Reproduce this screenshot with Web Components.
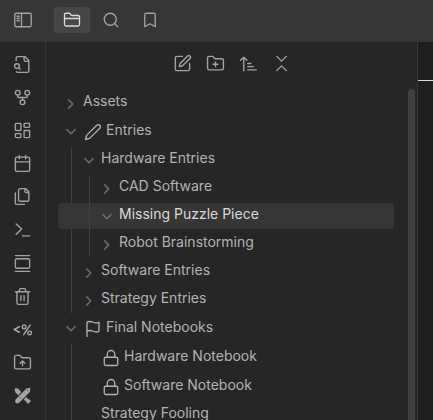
<!DOCTYPE html>
<html lang="en">
<head>
<meta charset="utf-8">
<title>Vault</title>
<style>
  html, body { height: 100%; margin: 0; }
  body {
    background: #262626;
    color: #b3b3b3;
    font: 14px/20px Inter, "Liberation Sans", sans-serif;
    overflow: hidden;
  }
</style>
</head>
<body>
<vault-window></vault-window>
<script>
const ICONS = {
  sidebar: '<rect x="1" y="3" width="22" height="18" rx="2"/><path d="M10 3v18M4 7h3M4 10h3M4 13h3"/>',
  folder: '<path d="M20 20a2 2 0 0 0 2-2V8a2 2 0 0 0-2-2h-7.9a2 2 0 0 1-1.69-.9L9.6 3.9A2 2 0 0 0 7.93 3H4a2 2 0 0 0-2 2v13a2 2 0 0 0 2 2ZM2 10h20"/>',
  search: '<circle cx="11" cy="11" r="8"/><path d="m21 21-4.3-4.3"/>',
  bookmark: '<path d="m19 21-7-4-7 4V5a2 2 0 0 1 2-2h10a2 2 0 0 1 2 2z"/>',
  fileSearch: '<path d="M14 2v4a2 2 0 0 0 2 2h4M4.27 21a2 2 0 0 0 1.73 1H18a2 2 0 0 0 2-2V7l-5-5H6a2 2 0 0 0-2 2v3M9 18l-1.5-1.5"/><circle cx="5" cy="14" r="3"/>',
  fork: '<circle cx="12" cy="18" r="3"/><circle cx="6" cy="6" r="3"/><circle cx="18" cy="6" r="3"/><path d="M18 9v2c0 .6-.4 1-1 1H7c-.6 0-1-.4-1-1V9M12 12v3"/>',
  dashboard: '<rect x="3" y="3" width="7" height="9" rx="1"/><rect x="14" y="3" width="7" height="5" rx="1"/><rect x="14" y="12" width="7" height="9" rx="1"/><rect x="3" y="16" width="7" height="5" rx="1"/>',
  calendar: '<rect x="3" y="4" width="18" height="18" rx="2"/><path d="M16 2v4M8 2v4M3 10h18"/>',
  files: '<path d="M20 7h-3a2 2 0 0 1-2-2V2M9 18a2 2 0 0 1-2-2V4a2 2 0 0 1 2-2h7l4 4v10a2 2 0 0 1-2 2ZM3 7.6v12.8A1.6 1.6 0 0 0 4.6 22h9.8"/>',
  terminal: '<path d="m4 18 7-6.5L4 5M12 20h9"/>',
  gallery: '<path d="M3 2h18M3 22h18"/><rect x="3" y="6" width="18" height="12" rx="2"/>',
  trash: '<path d="M3 6h18M19 6v14c0 1-1 2-2 2H7c-1 0-2-1-2-2V6M8 6V4c0-1 1-2 2-2h4c1 0 2 1 2 2v2M10 11v6M14 11v6"/>',
  template: '<path stroke-width="2" d="M8 8.5 1.5 12 8 15.5M21.5 6.5l-8 12"/><circle cx="14" cy="8.7" r="2.3"/><circle cx="21" cy="16.3" r="2.3"/>',
  folderUp: '<path d="M20 20a2 2 0 0 0 2-2V8a2 2 0 0 0-2-2h-7.9a2 2 0 0 1-1.69-.9L9.6 3.9A2 2 0 0 0 7.93 3H4a2 2 0 0 0-2 2v13a2 2 0 0 0 2 2ZM12 10v6M9 13l3-3 3 3"/>',
  draw: '<g fill="currentColor" stroke="none"><path d="M22 2.2l-.5 5L8.5 20.5c-1.5 1.5-3.7 2-5.2.8-1.2-1.5-.7-3.7.8-5.2L17 3.2z"/><path d="M2.2 3.2c2-.8 4.5.1 6 2l2.3 2.8-3.8 3.8-2.6-2.5C2.5 8 1.9 5.5 2.2 3.2z"/><path d="M16.4 13.8l3 3c1.8 0 2.9 1.2 2.9 2.6l-2.7 2.8c-1.5 0-2.7-.9-2.7-2.7l-3.4-2.2z"/></g><path stroke="#262626" stroke-width="1" d="M18 5.5l.6.6M9 14.5l.8.8"/>',
  edit: '<path d="M12 3H5a2 2 0 0 0-2 2v14a2 2 0 0 0 2 2h14a2 2 0 0 0 2-2v-7M18.38 2.62a1 1 0 0 1 3 3l-9.02 9.02a2 2 0 0 1-.85.5l-2.87.84a.5.5 0 0 1-.62-.62l.84-2.87a2 2 0 0 1 .5-.85z"/>',
  folderPlus: '<path d="M20 20a2 2 0 0 0 2-2V8a2 2 0 0 0-2-2h-7.9a2 2 0 0 1-1.69-.9L9.6 3.9A2 2 0 0 0 7.93 3H4a2 2 0 0 0-2 2v13a2 2 0 0 0 2 2ZM12 10v6M9 13h6"/>',
  sort: '<path d="m2 8 4-4 4 4M6 4v17M11 12h4M11 16h7M11 20h11"/>',
  collapse: '<path d="m6 21 6-6 6 6M6 3l6 6 6-6"/>',
  pencil: '<path d="M17 3a2.83 2.83 0 1 1 4 4L7.5 20.5 2 22l1.5-5.5Z"/>',
  flag: '<path d="M4 15s1-1 4-1 5 2 8 2 4-1 4-1V3s-1 1-4 1-5-2-8-2-4 1-4 1zM4 22V3"/>',
  lock: '<rect x="3" y="11" width="18" height="11" rx="2"/><path d="M7 11V7a5 5 0 0 1 10 0v4"/>',
  chevron: '<path stroke-width="3" d="m8 5 7 7-7 7"/>'
};

const define = (tag, html, setup) => customElements.define(tag, class extends HTMLElement {
  connectedCallback() {
    if (this.shadowRoot) return;
    const template = document.createElement('template');
    template.innerHTML = html;
    this.attachShadow({ mode: 'open' }).append(template.content.cloneNode(true));
    if (setup) setup(this, this.shadowRoot);
  }
});

define('ui-icon', `
  <style>
    :host { display: block; flex: none; width: var(--icon-size, 19px); height: var(--icon-size, 19px); }
    svg { display: block; width: 100%; height: 100%; fill: none; stroke: currentColor;
          stroke-width: 1.75; stroke-linecap: round; stroke-linejoin: round; }
  </style>
  <svg viewBox="0 0 24 24" aria-hidden="true"></svg>`,
  (host, root) => { root.querySelector('svg').innerHTML = ICONS[host.getAttribute('name')]; });

define('icon-button', `
  <style>
    :host { display: block; flex: none; color: #a3a3a3; }
    button { display: grid; place-items: center; width: var(--button-width, 30px); height: var(--button-height, 30px);
             padding: 0; border: 0; border-radius: 4px; background: none; color: inherit; }
    :host([active]) { color: #dadada; }
    :host([active]) button { background: #464646; }
  </style>
  <button type="button"></button>`,
  (host, root) => {
    const button = root.querySelector('button');
    button.innerHTML = `<ui-icon name="${host.getAttribute('icon')}"></ui-icon>`;
    button.setAttribute('aria-label', host.getAttribute('label'));
  });

define('tab-header', `
  <style>
    :host { display: flex; align-items: center; height: 42px; box-sizing: border-box; padding: 0 5px 2px;
            gap: 3px; background: #363636; --button-width: 36px; --button-height: 26px; --icon-size: 18px; }
    ::slotted(:first-child) { margin-right: 10px; }
  </style>
  <slot></slot>`);

define('side-ribbon', `
  <style>
    :host { display: flex; flex-direction: column; justify-content: space-between; align-items: center;
            box-sizing: border-box; width: 46px; flex: none; padding: 7px 0 9px; border-right: 1px solid #363636; }
  </style>
  <slot></slot>`);

define('file-panel', `
  <style>
    :host { display: flex; flex-direction: column; flex: 1; min-width: 0; border-right: 1px solid #363636; }
    nav { display: flex; justify-content: center; gap: 3px; padding: 6px 0 11px; }
    .scroller { flex: 1; min-height: 0; display: flex; }
    .list { flex: 1; min-width: 0; overflow: hidden; padding: 1px 14px 0 12px; }
    .bar { width: 7px; margin-right: 2px; border-radius: 4px 4px 0 0; background: #3f3f3f; }
  </style>
  <nav aria-label="File actions"><slot name="actions"></slot></nav>
  <div class="scroller"><div class="list"><slot></slot></div><div class="bar"></div></div>`);

define('tree-item', `
  <style>
    :host { display: block; margin-bottom: 2px; --icon-size: 18px; }
    button { display: flex; align-items: center; width: 100%; height: 26px; padding: 0 0 4px;
             padding-left: calc(25px + var(--level, 0) * 18px);
             border: 0; border-radius: 4px; background: none; color: inherit; font: inherit; text-align: left; }
    :host([icon]) button { height: 27px; }
    :host([active]) button { background: #363636; color: #dadada; }
    .fold { --icon-size: 14px; margin: 5px 5px 0 -19px; color: #6a6a6a; }
    .open { transform: rotate(90deg); }
    .mark { margin: 5px 4px 0 1px; }
    .label { white-space: nowrap; }
    .children { position: relative; margin-top: 2px; }
    .children::before { content: ""; position: absolute; top: 0; bottom: 0; width: 1px;
                        left: calc(13px + var(--level, 0) * 18px); background: #414141; }
    .children:not(.shown) { display: none; }
    ::slotted(tree-item:last-child) { margin-bottom: 0; }
  </style>
  <button type="button"><span class="label"></span></button>
  <div class="children"><slot></slot></div>`,
  (host, root) => {
    const parent = host.parentElement && host.parentElement.closest('tree-item');
    const level = parent ? Number(parent.dataset.level) + 1 : 0;
    host.dataset.level = level;
    const button = root.querySelector('button');
    button.style.setProperty('--level', level);
    root.querySelector('.children').style.setProperty('--level', level);
    root.querySelector('.label').textContent = host.getAttribute('label');
    const icon = host.getAttribute('icon');
    if (icon) button.insertAdjacentHTML('afterbegin', `<ui-icon class="mark" name="${icon}"></ui-icon>`);
    const fold = host.getAttribute('fold');
    if (fold) {
      button.insertAdjacentHTML('afterbegin', `<ui-icon class="fold ${fold}" name="chevron"></ui-icon>`);
      button.setAttribute('aria-expanded', String(fold === 'open'));
    }
    root.querySelector('.children').classList.toggle('shown', host.childElementCount > 0);
  });

define('note-pane', `
  <style>
    :host { display: block; flex: none; width: 15px; padding-top: 38px; background: #1e1e1e; }
    hr { margin: 0; border: 0; border-top: 1px solid #dadada; }
  </style>
  <hr>`);

define('vault-window', `
  <style>
    :host { display: flex; flex-direction: column; height: 100vh; }
    main { display: flex; flex: 1; min-height: 0; }
  </style>
  <tab-header>
    <icon-button icon="sidebar" label="Toggle sidebar"></icon-button>
    <icon-button icon="folder" label="Files" active></icon-button>
    <icon-button icon="search" label="Search"></icon-button>
    <icon-button icon="bookmark" label="Bookmarks"></icon-button>
  </tab-header>
  <main>
    <side-ribbon>
      <icon-button icon="fileSearch" label="Quick switcher"></icon-button>
      <icon-button icon="fork" label="Graph view"></icon-button>
      <icon-button icon="dashboard" label="Canvas"></icon-button>
      <icon-button icon="calendar" label="Daily note"></icon-button>
      <icon-button icon="files" label="Insert template"></icon-button>
      <icon-button icon="terminal" label="Command palette"></icon-button>
      <icon-button icon="gallery" label="Slides"></icon-button>
      <icon-button icon="trash" label="Clean up"></icon-button>
      <icon-button icon="template" label="Templater"></icon-button>
      <icon-button icon="folderUp" label="Publish"></icon-button>
      <icon-button icon="draw" label="New drawing"></icon-button>
    </side-ribbon>
    <file-panel>
      <icon-button slot="actions" icon="edit" label="New note"></icon-button>
      <icon-button slot="actions" icon="folderPlus" label="New folder"></icon-button>
      <icon-button slot="actions" icon="sort" label="Sort order"></icon-button>
      <icon-button slot="actions" icon="collapse" label="Collapse all"></icon-button>
      <tree-item label="Assets" fold="closed"></tree-item>
      <tree-item label="Entries" fold="open" icon="pencil">
        <tree-item label="Hardware Entries" fold="open">
          <tree-item label="CAD Software" fold="closed"></tree-item>
          <tree-item label="Missing Puzzle Piece" fold="open" active></tree-item>
          <tree-item label="Robot Brainstorming" fold="closed"></tree-item>
        </tree-item>
        <tree-item label="Software Entries" fold="closed"></tree-item>
        <tree-item label="Strategy Entries" fold="closed"></tree-item>
      </tree-item>
      <tree-item label="Final Notebooks" fold="open" icon="flag">
        <tree-item label="Hardware Notebook" icon="lock"></tree-item>
        <tree-item label="Software Notebook" icon="lock"></tree-item>
        <tree-item label="Strategy Fooling"></tree-item>
      </tree-item>
    </file-panel>
    <note-pane></note-pane>
  </main>`);
</script>
</body>
</html>
